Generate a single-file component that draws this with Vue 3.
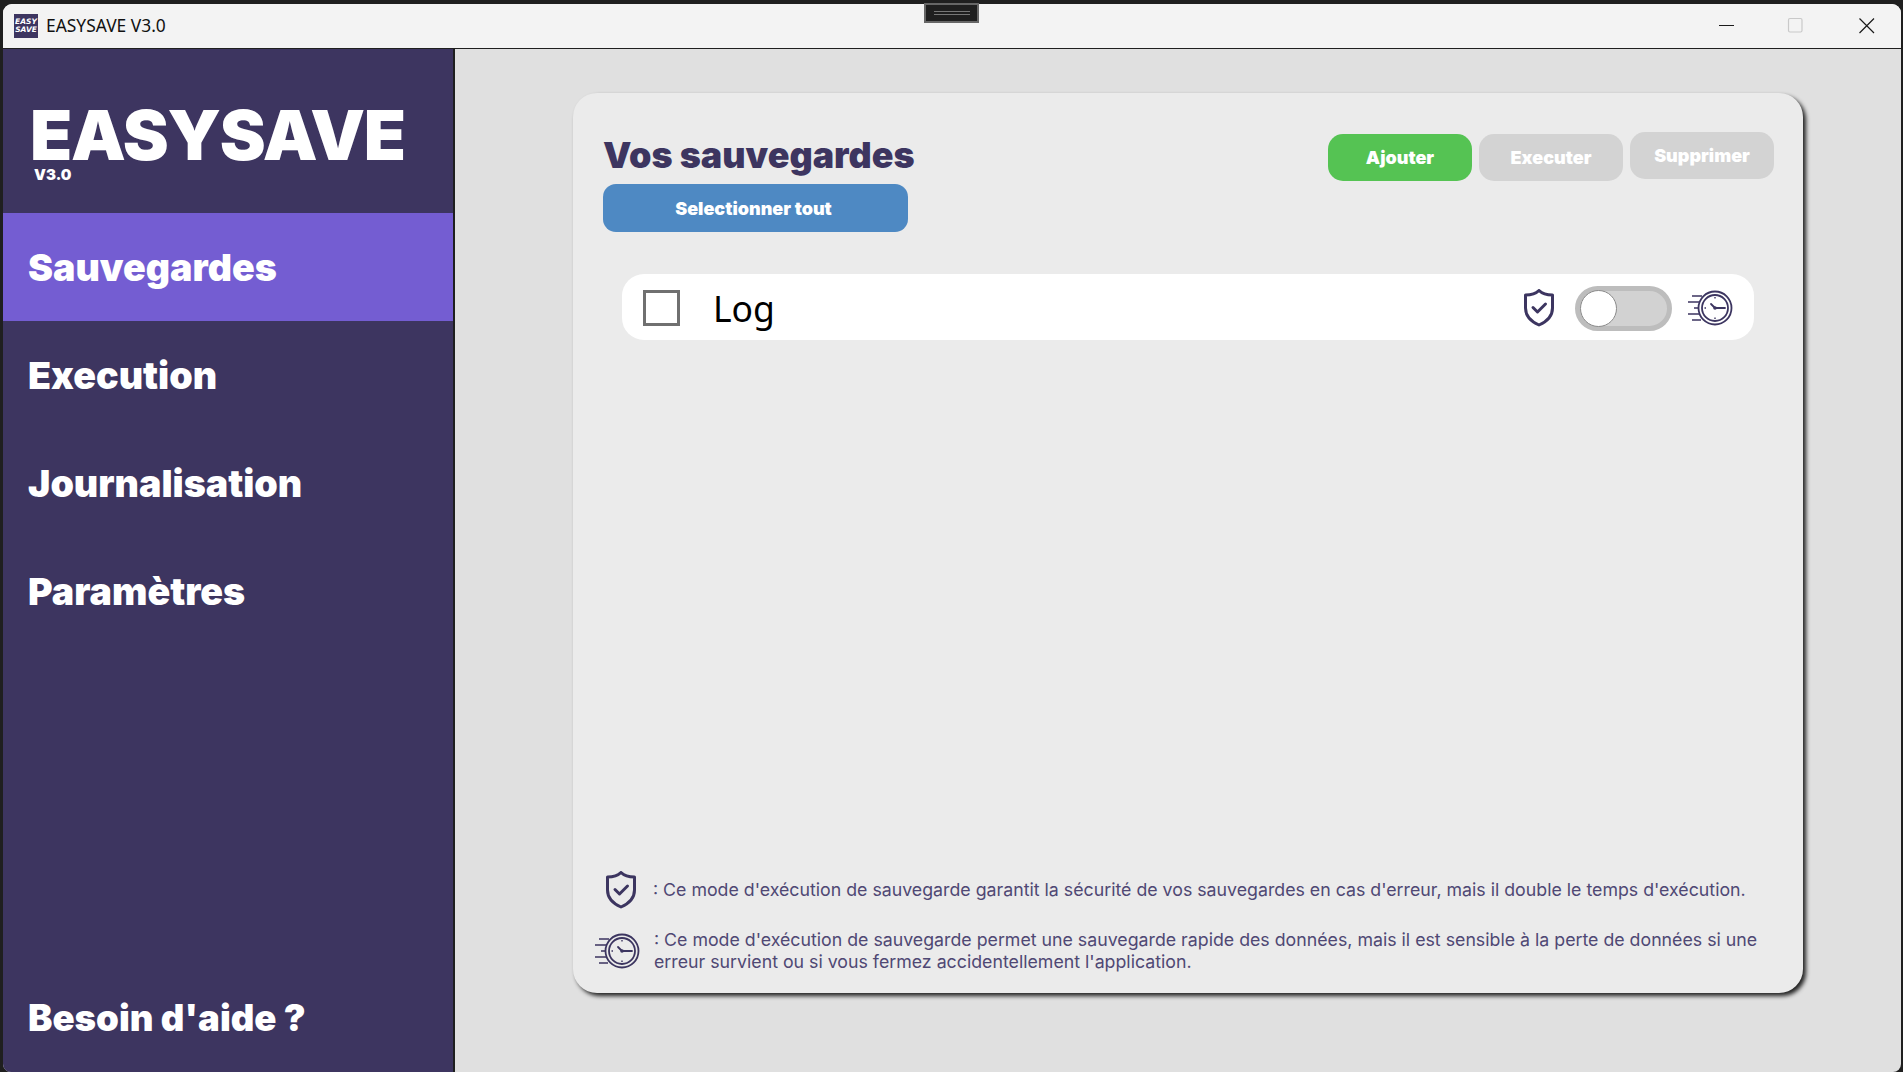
<script setup>
const navItems = [
  { label: 'Sauvegardes', active: true },
  { label: 'Execution', active: false },
  { label: 'Journalisation', active: false },
  { label: 'Paramètres', active: false }
]
</script>

<template>
  <div class="screen">
    <div class="handle"><span></span></div>
    <div class="window">
      <header class="titlebar">
        <div class="app-icon"><span>EASY</span><span>SAVE</span></div>
        <span class="app-title">EASYSAVE V3.0</span>
        <div class="controls">
          <svg class="ctl" width="58" height="44" viewBox="0 0 58 44"><path d="M21 21.500h15" stroke="#1a1a1a" stroke-width="1" fill="none"/></svg>
          <svg class="ctl" width="58" height="44" viewBox="0 0 58 44"><rect x="20.500" y="14.500" width="13.500" height="13.500" rx="1.500" stroke="#c9c9c9" stroke-width="1.200" fill="none"/></svg>
          <svg class="ctl" width="58" height="44" viewBox="0 0 58 44"><path d="M21.500 14.500l14.500 14.500M36 14.500l-14.500 14.500" stroke="#1a1a1a" stroke-width="1.200" fill="none"/></svg>
        </div>
      </header>
      <div class="body">
        <aside class="sidebar">
          <div class="logo">
            <div class="logo-name">EASYSAVE</div>
            <div class="logo-ver">V3.0</div>
          </div>
          <nav class="nav">
            <div v-for="item in navItems" :key="item.label" class="nav-item" :class="{ active: item.active }">{{ item.label }}</div>
          </nav>
          <div class="help">Besoin d'aide ?</div>
        </aside>
        <main class="main">
          <section class="card">
            <div class="card-head">
              <div class="head-left">
                <h1 class="card-title">Vos sauvegardes</h1>
                <button class="btn select">Selectionner tout</button>
              </div>
              <div class="actions">
                <button class="btn action green">Ajouter</button>
                <button class="btn action grey">Executer</button>
                <button class="btn action grey up">Supprimer</button>
              </div>
            </div>
            <div class="row">
              <span class="check"></span>
              <span class="row-name">Log</span>
              <svg class="shield" viewBox="0 0 32 38" width="32" height="38">
                <path d="M16 1.500c3 3 8 4.500 13.500 4.500v13c0 8-5.500 13.500-13.500 17C8 32.500 2.500 27 2.500 19V6C8 6 13 4.500 16 1.500z" fill="none" stroke="#3c3560" stroke-width="3" stroke-linejoin="round"/>
                <path d="M10 18.500l4.500 4.500 8-8" fill="none" stroke="#3c3560" stroke-width="3" stroke-linecap="round" stroke-linejoin="round"/>
              </svg>
              <div class="toggle"><span class="knob"></span></div>
              <svg class="clock" viewBox="0 0 46 36" width="46" height="36">
                <circle cx="28" cy="18" r="16.500" fill="none" stroke="#3c3560" stroke-width="1.800"/>
                <circle cx="28" cy="18" r="13" fill="none" stroke="#3c3560" stroke-width="1.800"/>
                <path d="M28 18l-4-4M28 18h10" fill="none" stroke="#3c3560" stroke-width="1.800" stroke-linecap="round"/>
                <circle cx="28" cy="18" r="1.800" fill="#3c3560"/>
                <path d="M28 7v1.500M28 27.500v1.500M17.500 18h1.500" stroke="#3c3560" stroke-width="1.400"/>
                <path d="M5 6h10M1 12h12M7 18h5M1 24h11M5 30h9" fill="none" stroke="#3c3560" stroke-width="1.500"/>
              </svg>
            </div>
            <div class="notes">
              <div class="note one">
                <svg class="note-shield" viewBox="0 0 32 38" width="32" height="38">
                  <path d="M16 1.500c3 3 8 4.500 13.500 4.500v13c0 8-5.500 13.500-13.500 17C8 32.500 2.500 27 2.500 19V6C8 6 13 4.500 16 1.500z" fill="none" stroke="#3c3560" stroke-width="3" stroke-linejoin="round"/>
                  <path d="M10 18.500l4.500 4.500 8-8" fill="none" stroke="#3c3560" stroke-width="3" stroke-linecap="round" stroke-linejoin="round"/>
                </svg>
                <p>: Ce mode d'exécution de sauvegarde garantit la sécurité de vos sauvegardes en cas d'erreur, mais il double le temps d'exécution.</p>
              </div>
              <div class="note two">
                <svg class="note-clock" viewBox="0 0 46 36" width="46" height="36">
                  <circle cx="28" cy="18" r="16.500" fill="none" stroke="#3c3560" stroke-width="1.800"/>
                  <circle cx="28" cy="18" r="13" fill="none" stroke="#3c3560" stroke-width="1.800"/>
                  <path d="M28 18l-4-4M28 18h10" fill="none" stroke="#3c3560" stroke-width="1.800" stroke-linecap="round"/>
                  <circle cx="28" cy="18" r="1.800" fill="#3c3560"/>
                  <path d="M28 7v1.500M28 27.500v1.500M17.500 18h1.500" stroke="#3c3560" stroke-width="1.400"/>
                  <path d="M5 6h10M1 12h12M7 18h5M1 24h11M5 30h9" fill="none" stroke="#3c3560" stroke-width="1.500"/>
                </svg>
                <p>: Ce mode d'exécution de sauvegarde permet une sauvegarde rapide des données, mais il est sensible à la perte de données si une erreur survient ou si vous fermez accidentellement l'application.</p>
              </div>
            </div>
          </section>
        </main>
      </div>
    </div>
  </div>
</template>

<style>
html, body { margin: 0; background: #1f1f1f; overflow: hidden; }
</style>

<style scoped>
* { box-sizing: border-box; }
.screen {
  position: relative;
  width: 1903px;
  height: 1072px;
  padding: 4px 2px 0 3px;
  background: #1f1f1f;
  font-family: Inter, "Liberation Sans", sans-serif;
}
.handle {
  position: absolute;
  left: 924px;
  top: 3px;
  width: 55px;
  height: 20px;
  background: #1f1f1f;
  border: 2px solid #666;
  display: flex;
  align-items: center;
  justify-content: center;
  z-index: 2;
}
.handle span {
  width: 36px;
  height: 4px;
  border-top: 1px solid #777;
  border-bottom: 1px solid #777;
}
.window {
  height: 100%;
  display: flex;
  flex-direction: column;
  border-radius: 9px 9px 8px 8px;
  overflow: hidden;
  background: #e0e0e0;
}
.titlebar {
  height: 45px;
  flex: none;
  display: flex;
  align-items: center;
  background: #f3f3f3;
  padding-left: 11px;
  border-bottom: 1px solid #1f1f1f;
}
.app-icon {
  width: 24px;
  height: 24px;
  background: #3d3560;
  color: #fff;
  display: flex;
  flex-direction: column;
  align-items: center;
  justify-content: center;
  font: italic 900 7.500px/8px "DejaVu Sans", sans-serif;
}
.app-title {
  margin-left: 8px;
  margin-bottom: 2px;
  font-family: "Noto Sans", sans-serif;
  font-size: 17.400px;
  color: #111;
}
.controls {
  margin-left: auto;
  display: flex;
  gap: 12px;
  padding-right: 5px;
}
.ctl { display: block; }
.body {
  flex: 1;
  display: flex;
  min-height: 0;
}
.sidebar {
  width: 452px;
  flex: none;
  display: flex;
  flex-direction: column;
  background: #3d3560;
  border-right: 2px solid #1f1f1f;
  color: #fff;
}
.logo {
  height: 164px;
  flex: none;
  padding: 48px 0 0 27px;
}
.logo-name {
  font-size: 69px;
  font-weight: 900;
  line-height: 76px;
  letter-spacing: -1.200px;
}
.logo-ver {
  font-size: 15px;
  font-weight: 900;
  line-height: 18px;
  margin: -7px 0 0 4px;
}
.nav { display: flex; flex-direction: column; }
.nav-item {
  height: 108px;
  display: flex;
  align-items: center;
  padding-left: 25px;
  font-size: 37.600px;
  font-weight: 900;
}
.nav-item.active { background: #745dd2; }
.help {
  margin-top: auto;
  height: 108px;
  display: flex;
  align-items: center;
  padding-left: 25px;
  font-size: 36.600px;
  font-weight: 900;
}
.main {
  flex: 1;
  padding: 44px 0 0 118px;
}
.card {
  width: 1230px;
  height: 900px;
  display: flex;
  flex-direction: column;
  padding: 39px 29px 0 30px;
  background: #ebebeb;
  border-radius: 24px;
  box-shadow: 3px 3px 4px rgba(0, 0, 0, 0.85);
}
.card-head {
  display: flex;
  justify-content: space-between;
  align-items: flex-start;
}
.head-left { display: flex; flex-direction: column; }
.card-title {
  margin: 0;
  height: 52px;
  font-size: 35.900px;
  font-weight: 900;
  line-height: 47px;
  color: #3d3560;
}
.btn {
  border: none;
  font-family: inherit;
  font-weight: 900;
  color: #fff;
  padding: 0;
}
.select {
  width: 305px;
  height: 48px;
  background: #4e89c3;
  border-radius: 13px;
  font-size: 18px;
  padding-right: 4px;
}
.actions { display: flex; gap: 7px; }
.action {
  width: 144px;
  height: 47px;
  margin-top: 2px;
  border-radius: 15px;
  font-size: 18px;
}
.action.up { margin-top: 0; }
.green { background: #55c353; }
.grey { background: #d3d3d3; }
.row {
  width: 1132px;
  height: 66px;
  margin: 42px 0 0 19px;
  flex: none;
  display: flex;
  align-items: center;
  background: #fff;
  border-radius: 22px;
  padding: 2px 0 0 21px;
  color: #111;
}
.check {
  width: 37px;
  height: 36px;
  border: 3px solid #707070;
}
.row-name {
  margin-left: 33px;
  font-family: "Noto Sans", sans-serif;
  font-size: 35.500px;
  font-weight: 400;
  line-height: 48px;
  color: #000;
}
.shield { margin-left: auto; flex: none; }
.toggle {
  width: 97px;
  height: 45px;
  margin-left: 20px;
  flex: none;
  border-radius: 23px;
  background: #d2d2d2;
  border: 5px solid #bdbdbd;
  display: flex;
  align-items: center;
}
.knob {
  width: 37px;
  height: 37px;
  border-radius: 50%;
  background: #fff;
  border: 1.500px solid #8a8a8a;
}
.clock { margin: 0 21px 0 15px; flex: none; }
.notes {
  margin-top: auto;
  padding-bottom: 20px;
  color: #4f4874;
  font-size: 17.750px;
  line-height: 22px;
}
.notes p { margin: 0; }
.note { display: flex; align-items: center; }
.note.one { padding-left: 2px; margin-bottom: 20px; }
.note.one p { margin-left: 16px; }
.note.two { margin-left: -9px; }
.note.two p { margin-left: 14px; width: 1120px; }
</style>
